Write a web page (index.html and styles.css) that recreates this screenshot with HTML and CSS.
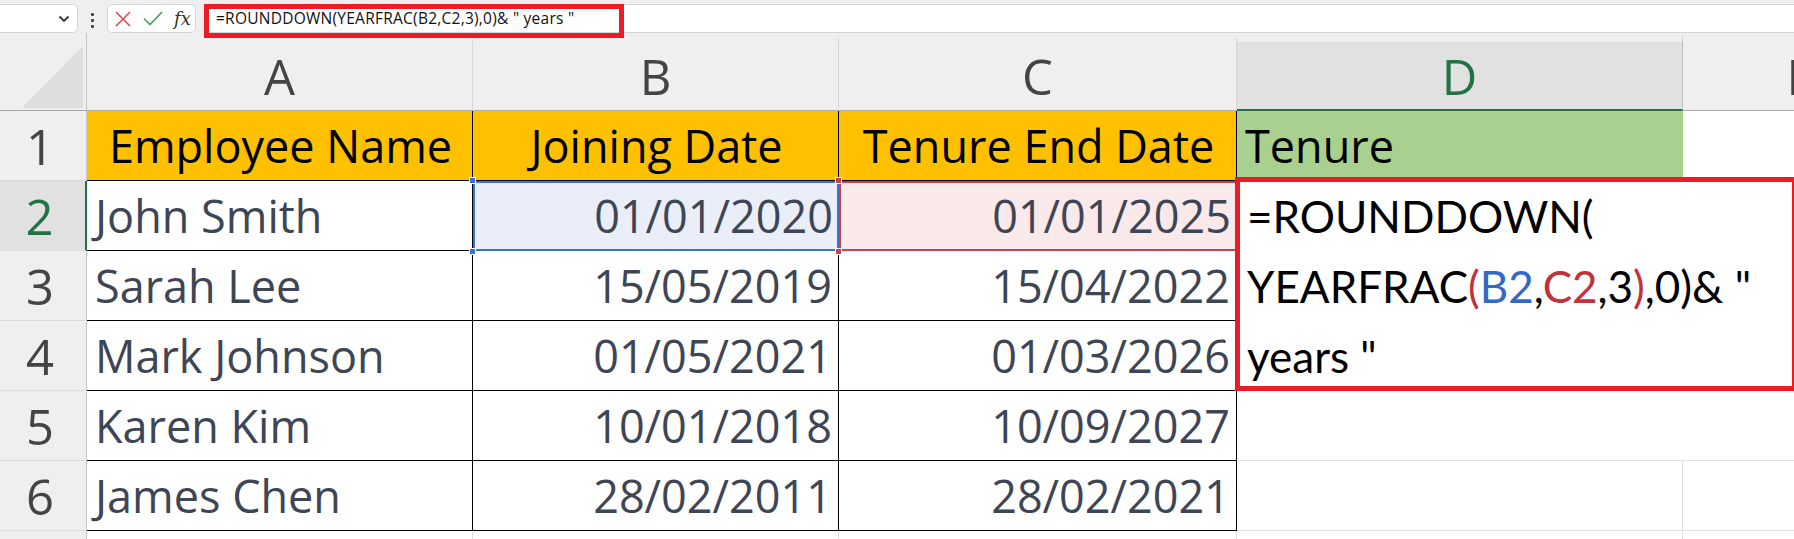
FILE: index.html
```html
<html><head><meta charset="utf-8">
<title>Tenure - ROUNDDOWN YEARFRAC</title>
<link rel="stylesheet" href="styles.css">
</head><body>
<div class="topbar">
  <div class="namebox">
    <svg class="chev" width="12" height="8" viewBox="0 0 12 8"><path d="M1.5 1.5 L6 6 L10.5 1.5" fill="none" stroke="#333" stroke-width="1.8"/></svg>
  </div>
  <div class="grip"><i></i><i></i><i></i></div>
  <div class="fxbox">
    <svg class="cancel" width="16" height="16" viewBox="0 0 16 16"><path d="M1 1 L15 15 M15 1 L1 15" stroke="#e2444a" stroke-width="1.5" fill="none"/></svg>
    <svg class="enter" width="20" height="15" viewBox="0 0 20 15"><path d="M1 7.5 L7 13.5 L19 1" stroke="#45a050" stroke-width="1.6" fill="none"/></svg>
    <span class="fx">fx</span>
  </div>
  <div class="formula">
    <span class="formula-text">=ROUNDDOWN(YEARFRAC(B2,C2,3),0)&amp; " years "</span>
    <div class="mark mark-formula"></div>
  </div>
</div>

<div class="sheet">
  <!-- column headers -->
  <div class="corner"><svg width="86" height="77" viewBox="0 0 86 77"><polygon points="22,75 83,13 83,75" fill="#dedede"/></svg></div>
  <div class="colhead">A</div>
  <div class="colhead">B</div>
  <div class="colhead">C</div>
  <div class="colhead active">D</div>
  <div class="colhead last">E</div>

  <!-- row 1 -->
  <div class="rowhead">1</div>
  <div class="cell t hdr">Employee Name</div>
  <div class="cell t hdr">Joining Date</div>
  <div class="cell t hdr">Tenure End Date</div>
  <div class="cell green">Tenure</div>
  <div class="cell blank"></div>

  <!-- row 2 -->
  <div class="rowhead active">2</div>
  <div class="cell t">John Smith</div>
  <div class="cell t num ref-blue">01/01/2020</div>
  <div class="cell t num ref-red">01/01/2025</div>
  <div class="cell editing">=ROUNDDOWN(<br>YEARFRAC<span class="p">(</span><span class="r1">B2</span>,<span class="r2">C2</span>,3<span class="p">)</span>,0)&amp; "<br>years "</div>

  <!-- row 3 -->
  <div class="rowhead">3</div>
  <div class="cell t">Sarah Lee</div>
  <div class="cell t num">15/05/2019</div>
  <div class="cell t num">15/04/2022</div>

  <!-- row 4 -->
  <div class="rowhead">4</div>
  <div class="cell t">Mark Johnson</div>
  <div class="cell t num">01/05/2021</div>
  <div class="cell t num">01/03/2026</div>

  <!-- row 5 -->
  <div class="rowhead">5</div>
  <div class="cell t">Karen Kim</div>
  <div class="cell t num">10/01/2018</div>
  <div class="cell t num">10/09/2027</div>
  <div class="cell open"></div>
  <div class="cell"></div>

  <!-- row 6 -->
  <div class="rowhead">6</div>
  <div class="cell t">James Chen</div>
  <div class="cell t num">28/02/2011</div>
  <div class="cell t num">28/02/2021</div>
  <div class="cell"></div>
  <div class="cell"></div>

  <!-- row 7, only its top edge is in view -->
  <div class="rowhead"></div>
  <div class="cell"></div>
  <div class="cell"></div>
  <div class="cell"></div>
  <div class="cell"></div>
  <div class="cell"></div>

  <div class="mark mark-cell"></div>
</div>
</body></html>
```

FILE: styles.css
```css
html, body {
  margin: 0;
  padding: 0;
}
body {
  width: 1794px;
  height: 539px;
  overflow: hidden;
  background-color: #fff;
  font-family: "Open Sans", "Noto Sans", sans-serif;
}

/* formula bar */
.topbar {
  display: flex;
  align-items: flex-start;
  height: 33px;
  padding-top: 4px;
  box-sizing: border-box;
  background-color: #efefef;
  position: relative;
  z-index: 3;
}
.namebox {
  width: 83px;
  height: 29px;
  margin-left: -5px;
  box-sizing: border-box;
  background-color: #fff;
  border: 1px solid #d6d6d6;
  border-radius: 5px;
}
.chev {
  display: block;
  margin: 10px 0 0 62px;
}
.grip {
  width: 3px;
  margin: 9px 0 0 13px;
}
.grip i {
  display: block;
  width: 3px;
  height: 3px;
  margin-bottom: 3px;
  border-radius: 1px;
  background-color: #444;
}
.fxbox {
  display: flex;
  align-items: center;
  width: 89px;
  height: 29px;
  margin-left: 13px;
  box-sizing: border-box;
  background-color: #fff;
  border: 1px solid #d6d6d6;
  border-radius: 5px;
}
.cancel {
  margin-left: 7px;
}
.enter {
  margin-left: 12px;
}
.fx {
  margin-left: 11px;
  font-family: "DejaVu Serif", "Liberation Serif", serif;
  font-style: italic;
  font-size: 18px;
  color: #333;
  line-height: 20px;
}
.formula {
  flex: 1;
  height: 29px;
  margin-left: 8px;
  box-sizing: border-box;
  background-color: #fff;
  border-top: 1px solid #d4d4d4;
  border-bottom: 1px solid #d4d4d4;
  position: relative;
}
.formula-text {
  display: block;
  padding-left: 12px;
  font-size: 15.5px;
  letter-spacing: 0.25px;
  line-height: 27px;
  color: #111;
  white-space: nowrap;
}

/* red annotation boxes */
.mark {
  position: absolute;
  box-sizing: border-box;
  border: 5px solid #ed1c24;
  z-index: 10;
}
.mark-formula {
  left: 0;
  top: -1px;
  width: 420px;
  height: 34px;
}
.mark-cell {
  left: 1235px;
  top: 144px;
  width: 562px;
  height: 214px;
}

/* grid */
.sheet {
  display: grid;
  grid-template-columns: 87px 386px 366px 398px 446px 234px;
  grid-template-rows: 78px repeat(7, 70px);
  position: relative;
}
.sheet > div {
  box-sizing: border-box;
}
.corner {
  background-color: #efefef;
  border-right: 1px solid #c6c6c6;
  border-bottom: 1px solid #ababab;
}
.corner svg {
  display: block;
}
.colhead {
  background-color: #efefef;
  border-top: 9px solid #efefef;
  border-right: 1px solid #d8d8d8;
  border-bottom: 1px solid #ababab;
  padding-top: 10px;
  text-align: center;
  font-size: 49px;
  line-height: 49px;
  color: #444;
  overflow: hidden;
}
.colhead.active {
  background-color: #e1e1e1;
  color: #217346;
  border-right-color: #bdbdbd;
  border-bottom: 2px solid #217346;
}
.colhead.last {
  border-right: none;
}
.rowhead {
  background-color: #efefef;
  border-right: 1px solid #c6c6c6;
  border-bottom: 1px solid #dadada;
  padding-right: 6px;
  text-align: center;
  font-size: 49px;
  line-height: 70px;
  color: #444;
}
.rowhead.active {
  background-color: #e1e1e1;
  color: #217346;
  border-right: 2px solid #217346;
}

.cell {
  font-family: "Open Sans", "Noto Sans", sans-serif;
  font-size: 45px;
  line-height: 70px;
  color: #3e4554;
  padding: 0 6px 0 8px;
  white-space: nowrap;
  overflow: hidden;
  border-right: 1px solid #e1e1e1;
  border-bottom: 1px solid #e1e1e1;
}
.cell.t {
  border-right-color: #000;
  border-bottom-color: #000;
}
.cell.num {
  text-align: right;
}
.cell.hdr {
  background-color: #ffc000;
  color: #000;
  text-align: center;
}
.cell.green {
  background-color: #a9d08e;
  color: #000;
  border-right-color: #a9d08e;
  border-bottom: none;
}
.cell.blank {
  border: none;
}
.cell.open {
  border-right: none;
}
.cell.editing {
  grid-column: span 2;
  grid-row: span 3;
  border: none;
  font-family: Lato, "Open Sans", sans-serif;
  font-size: 44px;
  color: #000;
  padding-left: 10px;
  overflow: visible;
}
.editing .p {
  color: #c0323c;
}
.editing .r1 {
  color: #3268c8;
}
.editing .r2 {
  color: #c0323c;
}

/* referenced cells in the formula */
.ref-blue, .ref-red {
  position: relative;
  overflow: visible;
}
.ref-blue {
  background-color: #e9eef8;
  border: none;
  box-shadow: inset 0 0 0 2px #3b72cf;
}
.ref-red {
  background-color: #f9e9ea;
  border-right: none;
  border-bottom: none;
  box-shadow: inset 0 0 0 2px #c9414b;
}
.ref-blue::before, .ref-blue::after,
.ref-red::before, .ref-red::after {
  content: "";
  position: absolute;
  left: -4px;
  width: 5px;
  height: 5px;
  border: 1px solid #fff;
  z-index: 2;
}
.ref-blue::before, .ref-red::before {
  top: -4px;
}
.ref-blue::after, .ref-red::after {
  bottom: -4px;
}
.ref-blue::before, .ref-blue::after {
  background-color: #3b72cf;
}
.ref-red::before, .ref-red::after {
  background-color: #c9414b;
}
```
